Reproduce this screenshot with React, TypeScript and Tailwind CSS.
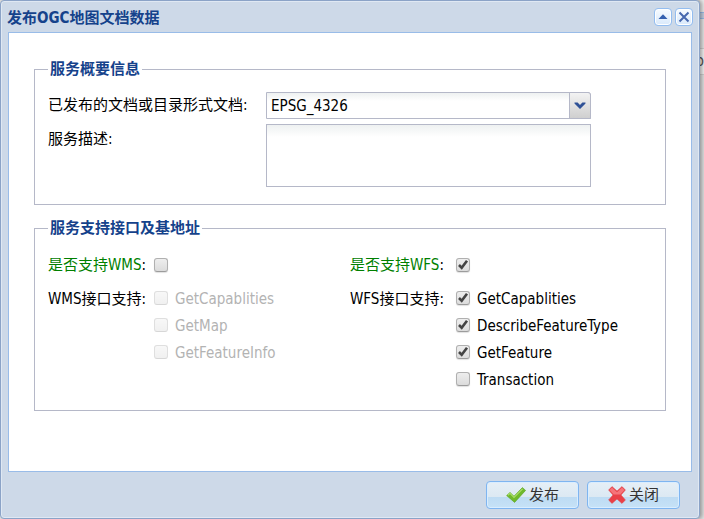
import React, { useState } from 'react';

const wmsInterfaces = ['GetCapablities', 'GetMap', 'GetFeatureInfo'];
const wfsInterfaces = ['GetCapablities', 'DescribeFeatureType', 'GetFeature', 'Transaction'];

const documents = ['EPSG_4326'];

interface CheckboxProps {
  id: string;
  checked: boolean;
  disabled?: boolean;
  onChange: () => void;
}

const Checkbox: React.FC<CheckboxProps> = ({ id, checked, disabled, onChange }) => (
  <span className="grid w-[14px] h-[14px] shrink-0">
    <input
      id={id}
      type="checkbox"
      checked={checked}
      disabled={disabled}
      onChange={onChange}
      className="col-start-1 row-start-1 appearance-none w-[14px] h-[14px] rounded-[3px] border border-[#b0b0b0] border-b-[#9c9c9c] bg-gradient-to-b from-[#eeeeee] to-[#dcdcdc] shadow-[0_1px_1px_rgba(0,0,0,0.12)] disabled:opacity-40 disabled:shadow-none"
    />
    {checked && (
      <svg viewBox="0 0 14 14" className="col-start-1 row-start-1 w-[14px] h-[14px] pointer-events-none">
        <path d="M3 7 5.7 9.8 11 2.8" fill="none" stroke="#444" strokeWidth="2.6" />
      </svg>
    )}
  </span>
);

interface ServiceProps {
  name: string;
  enabled: boolean;
  onToggle: () => void;
  interfaces: string[];
  selected: string[];
  onSelect: (name: string) => void;
}

const Service: React.FC<ServiceProps> = ({ name, enabled, onToggle, interfaces, selected, onSelect }) => (
  <div className="flex flex-col gap-[6px]">
    <div className="flex items-center h-[27px]">
      <label htmlFor={name} className="w-[106px] leading-[22px] whitespace-nowrap">
        <span className="text-[#008000]">是否支持{name}</span>:
      </label>
      <Checkbox id={name} checked={enabled} onChange={onToggle} />
    </div>
    <div className="flex">
      <span className="w-[106px] leading-[30px] whitespace-nowrap">{name}接口支持:</span>
      <ul>
        {interfaces.map((item) => (
          <li key={item} className="flex items-center gap-[7px] h-[27px]">
            <Checkbox
              id={`${name}-${item}`}
              checked={selected.includes(item)}
              disabled={!enabled}
              onChange={() => onSelect(item)}
            />
            <label
              htmlFor={`${name}-${item}`}
              className={enabled ? 'pt-[2px] text-black' : 'pt-[2px] text-[#b3b3b3]'}
            >
              {item}
            </label>
          </li>
        ))}
      </ul>
    </div>
  </div>
);

const toolClass =
  'flex items-center justify-center w-[18px] h-[18px] rounded-[4px] border border-[#93bdf0] bg-gradient-to-b from-[#f7fbff] to-[#d9e9fb] shadow-[inset_0_0_0_1px_#fff]';

const buttonClass =
  'flex items-center justify-center gap-[3px] w-[93px] h-[28px] rounded-[4px] border border-[#7fb5f0] bg-[linear-gradient(to_bottom,#e6eff6_0%,#dce9f3_56%,#bddbf3_57%,#c6e2f7_100%)] shadow-[inset_0_0_0_1px_#d9edff] text-[#333]';

const toggle = (list: string[], value: string) =>
  list.includes(value) ? list.filter((v) => v !== value) : [...list, value];

const App: React.FC = () => {
  const [doc, setDoc] = useState('EPSG_4326');
  const [description, setDescription] = useState('');
  const [wms, setWms] = useState(false);
  const [wfs, setWfs] = useState(true);
  const [wmsSelected, setWmsSelected] = useState<string[]>([]);
  const [wfsSelected, setWfsSelected] = useState(['GetCapablities', 'DescribeFeatureType', 'GetFeature']);

  return (
    <div className="flex min-h-screen bg-[#e2e2e2] text-[15px] leading-5 text-black font-['DejaVu_Sans_Condensed','Noto_Sans_CJK_SC',sans-serif]">
      <div
        role="dialog"
        aria-labelledby="dialog-title"
        className="relative flex-1 flex flex-col rounded-[4px] border border-[#8ba3c7] bg-[#cdd9e8] shadow-[inset_0_0_0_1px_#dfe8f3,2px_0_4px_rgba(0,0,0,0.35)]"
      >
        {/* Title bar */}
        <div className="flex items-center justify-between h-[31px] px-[6px]">
          <h1 id="dialog-title" className="pt-[2px] font-bold text-[#15428b]">发布OGC地图文档数据</h1>
          <div className="flex gap-[3px]">
            <button type="button" aria-label="收起" className={toolClass}>
              <svg viewBox="0 0 10 10" className="w-[10px] h-[10px]">
                <path d="M0.5 7 5 2.2 9.5 7Z" fill="#3460b0" />
              </svg>
            </button>
            <button type="button" aria-label="关闭窗口" className={toolClass}>
              <svg viewBox="0 0 12 12" className="w-[12px] h-[12px]">
                <path d="M1.5 1.5 10.5 10.5M10.5 1.5 1.5 10.5" stroke="#4667ae" strokeWidth="2" />
              </svg>
            </button>
          </div>
        </div>

        {/* Form */}
        <form className="flex-1 flex flex-col gap-[13px] mx-[7px] px-[25px] pt-[26px] bg-white border border-[#99bce8]">
          <fieldset className="border border-[#b5b8c8] px-[13px] pb-[17px]">
            <legend className="px-[2px] font-bold text-[#15428b]">服务概要信息</legend>
            <div className="grid grid-cols-[218px_325px] gap-y-[5px] pt-[13px]">
              <label htmlFor="doc" className="leading-[27px]">已发布的文档或目录形式文档:</label>
              <div className="grid h-[27px]">
                <select
                  id="doc"
                  value={doc}
                  onChange={(e) => setDoc(e.target.value)}
                  className="col-start-1 row-start-1 appearance-none w-full h-[27px] pl-[4px] border border-[#b5b8c8] rounded-tr-[3px] bg-[linear-gradient(to_bottom,#eef1f1,#fff_8px)]"
                >
                  {documents.map((item) => (
                    <option key={item} value={item}>{item}</option>
                  ))}
                </select>
                <span className="col-start-1 row-start-1 justify-self-end flex items-center justify-center w-[22px] h-[27px] pointer-events-none border border-[#b5b8c8] rounded-tr-[3px] bg-gradient-to-b from-[#f3f3f3] to-[#cfcfcf]">
                  <svg viewBox="0 0 12 8" className="w-[12px] h-[8px]">
                    <path d="M0.5 0.5H3.6L6 3 8.4 0.5H11.5V1.6L6 7 0.5 1.6Z" fill="#2f5196" />
                  </svg>
                </span>
              </div>
              <label htmlFor="description" className="leading-[30px]">服务描述:</label>
              <textarea
                id="description"
                value={description}
                onChange={(e) => setDescription(e.target.value)}
                className="block h-[63px] px-[5px] resize-none border border-[#b5b8c8] bg-[linear-gradient(to_bottom,#eef1f1,#fff_12px)]"
              />
            </div>
          </fieldset>

          <fieldset className="border border-[#b5b8c8] px-[13px] pb-[18px]">
            <legend className="px-[2px] font-bold text-[#15428b]">服务支持接口及基地址</legend>
            <div className="grid grid-cols-2 pt-[13px]">
              <Service
                name="WMS"
                enabled={wms}
                onToggle={() => setWms(!wms)}
                interfaces={wmsInterfaces}
                selected={wmsSelected}
                onSelect={(item) => setWmsSelected(toggle(wmsSelected, item))}
              />
              <Service
                name="WFS"
                enabled={wfs}
                onToggle={() => setWfs(!wfs)}
                interfaces={wfsInterfaces}
                selected={wfsSelected}
                onSelect={(item) => setWfsSelected(toggle(wfsSelected, item))}
              />
            </div>
          </fieldset>
        </form>

        {/* Footer buttons */}
        <div className="flex justify-end gap-2 py-[9px] pr-[19px]">
          <button type="button" className={buttonClass}>
            <svg viewBox="0 0 20 16" className="w-[20px] h-[16px]">
              <path d="M0.6 8.6 4 5.4 8 9.2 16.4 0.6 19.6 3.4 8.6 15.4Z" fill="#6fb92c" stroke="#5aa524" strokeWidth="0.6" />
              <path d="M1.8 8.3 4 6.4 8 10.4 16.6 1.8" fill="none" stroke="#a8dd66" strokeWidth="1.2" />
            </svg>
            发布
          </button>
          <button type="button" className={buttonClass}>
            <svg viewBox="0 0 18 18" className="w-[18px] h-[18px]">
              <path
                d="M0.6 4 4 0.6 9 5 14 0.6 17.4 4 13 9 17.4 14 14 17.4 9 13 4 17.4 0.6 14 5 9Z"
                fill="#e94048"
                stroke="#e04a4f"
                strokeWidth="0.6"
              />
              <path d="M1.6 4 4 1.6 9 6.2 14 1.6 16.4 4 12.4 8.4H5.6Z" fill="#f5747a" />
            </svg>
            关闭
          </button>
        </div>
      </div>

      {/* Page behind the window */}
      <div className="flex flex-col w-1">
        <div className="h-[12px] bg-[#ececec]" />
        <div className="h-[7px] bg-[#c3d0e2] border-y border-[#99bce8]" />
        <div className="h-[29px] bg-[#e6e6e6]" />
        <div className="flex justify-end h-[27px] bg-[#f2f2f2] border-y border-[#d0d0d0]">
          <span className="leading-[25px] text-[#555]">o</span>
        </div>
      </div>
    </div>
  );
};

export default App;
